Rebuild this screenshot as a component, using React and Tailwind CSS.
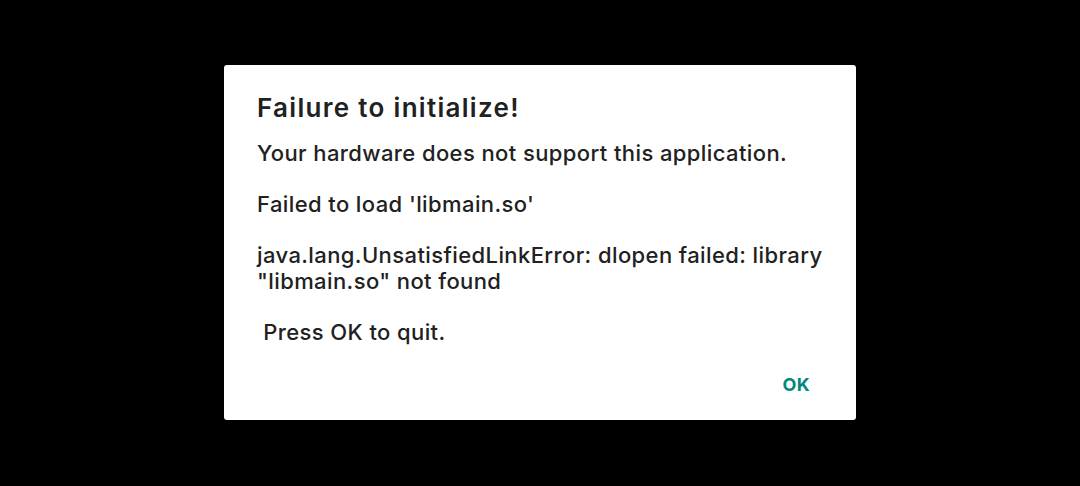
const body = `Your hardware does not support this application.

Failed to load 'libmain.so'

java.lang.UnsatisfiedLinkError: dlopen failed: library "libmain.so" not found

 Press OK to quit.`;

const App = () => {
  return (
    <div
      className="w-[1080px] h-[486px] bg-black flex items-start justify-center pt-[65px]"
      style={{ fontFamily: 'Inter, "Noto Sans", sans-serif' }}
    >
      <div className="w-[632px] h-[355px] bg-white rounded-[3px] flex flex-col pl-[33px] pr-[28px] pt-[26px]">
        <h2 className="text-[26px] leading-[34px] font-semibold tracking-[1.3px] text-[#212121]">
          Failure to initialize!
        </h2>
        <p className="mt-[16px] text-[22px] leading-[25.5px] font-medium tracking-[0.4px] text-[#212121] whitespace-pre-wrap">
          {body}
        </p>
        <div className="flex justify-end mt-auto mb-[18px]">
          <button className="text-[18px] font-bold tracking-[0.3px] text-[#00897b] px-[14px] py-[4px] mr-[4px]">
            OK
          </button>
        </div>
      </div>
    </div>
  );
};

export default App;
